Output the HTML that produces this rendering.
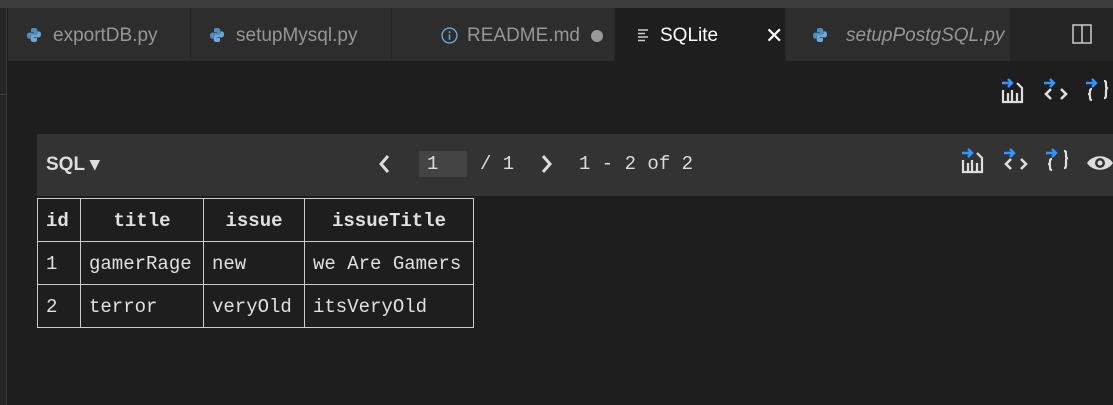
<!DOCTYPE html>
<html><head><style>
*{margin:0;padding:0;box-sizing:border-box}
body{width:1113px;height:405px;background:#1e1e1e;position:relative;overflow:hidden;font-family:"Liberation Sans",sans-serif}
.top{position:absolute;left:0;top:0;width:1113px;height:8px;background:#3c3c3c}
.side{position:absolute;left:0;top:8px;width:7px;height:397px;background:#252526;border-right:1px solid #3a3a3a}
.side i{position:absolute;left:0;top:86px;width:7px;height:1px;background:#3a3a3a}
.tabs{position:absolute;left:8px;top:8px;height:53px;width:1105px;background:#252526}
.tab{position:absolute;top:0;height:53px;background:#2d2d2d;border-right:1px solid #252526;color:#969696;font-size:19px;line-height:56px;white-space:nowrap}
.tab.act{background:#1e1e1e;color:#fff}
.py{position:absolute;top:19px;width:16px;height:16px}
.mono{font-family:"Liberation Mono",monospace}
.bar{position:absolute;left:37px;top:134px;width:1076px;height:62px;background:#333}
table{position:absolute;left:37px;top:198px;border-collapse:collapse;font-family:"Liberation Mono",monospace;font-size:19px;color:#e0e0e0}
td,th{border:1.5px solid #ccc;height:43px;padding:2px 8px 0;text-align:left;white-space:nowrap}
th{text-align:center;font-weight:bold}
</style></head><body>
<div class="top"></div>
<div class="side"><i></i></div>
<div class="tabs">
 <div class="tab" style="left:0;width:183px"><svg class="py" style="left:18px" viewBox="0 0 16 16"><path d="M8 1C5 1 5 2 5 3v2h3.2v.6H3.5C2 5.6 1 6.6 1 8.6s1 3 2.3 3H4.5V10c0-1.2 1-2 2-2h3c1 0 1.8-.8 1.8-1.8V3c0-1-1-2-3.3-2z" fill="#4e8fc2"/><path d="M8 15c3 0 3-1 3-2v-2H7.8v-.6h4.7c1.5 0 2.5-1 2.5-3s-1-3-2.3-3h-1.2V6c0 1.2-1 2-2 2h-3c-1 0-1.8.8-1.8 1.8V13c0 1 1 2 3.3 2z" fill="#6fa8d6"/></svg><span style="position:absolute;left:45px">exportDB.py</span></div>
 <div class="tab" style="left:183px;width:201px"><svg class="py" style="left:18px" viewBox="0 0 16 16"><path d="M8 1C5 1 5 2 5 3v2h3.2v.6H3.5C2 5.6 1 6.6 1 8.6s1 3 2.3 3H4.5V10c0-1.2 1-2 2-2h3c1 0 1.8-.8 1.8-1.8V3c0-1-1-2-3.3-2z" fill="#4e8fc2"/><path d="M8 15c3 0 3-1 3-2v-2H7.8v-.6h4.7c1.5 0 2.5-1 2.5-3s-1-3-2.3-3h-1.2V6c0 1.2-1 2-2 2h-3c-1 0-1.8.8-1.8 1.8V13c0 1 1 2 3.3 2z" fill="#6fa8d6"/></svg><span style="position:absolute;left:45px">setupMysql.py</span></div>
 <div class="tab" style="left:384px;width:223px"><svg class="py" style="left:49px;width:17px;height:17px" viewBox="0 0 16 16"><circle cx="8" cy="8" r="7" fill="none" stroke="#6fa8d6" stroke-width="1.3"/><rect x="7.3" y="7" width="1.4" height="5" fill="#6fa8d6"/><circle cx="8" cy="4.8" r=".9" fill="#6fa8d6"/></svg><span style="position:absolute;left:75px">README.md</span><span style="position:absolute;left:199px;top:22px;width:12px;height:12px;border-radius:50%;background:#9a9a9a"></span></div>
 <div class="tab act" style="left:607px;width:171px"><svg style="position:absolute;left:22px;top:20px" width="13" height="14" viewBox="0 0 13 14"><path d="M1 2h10M1 5.5h7M1 9h10M1 12.5h7" stroke="#ccc" stroke-width="1.4"/></svg><span style="position:absolute;left:45px">SQLite</span><span style="position:absolute;left:150px;font-size:22px">✕</span></div>
 <div class="tab" style="left:778px;width:225px"><svg class="py" style="left:26px" viewBox="0 0 16 16"><path d="M8 1C5 1 5 2 5 3v2h3.2v.6H3.5C2 5.6 1 6.6 1 8.6s1 3 2.3 3H4.5V10c0-1.2 1-2 2-2h3c1 0 1.8-.8 1.8-1.8V3c0-1-1-2-3.3-2z" fill="#4e8fc2"/><path d="M8 15c3 0 3-1 3-2v-2H7.8v-.6h4.7c1.5 0 2.5-1 2.5-3s-1-3-2.3-3h-1.2V6c0 1.2-1 2-2 2h-3c-1 0-1.8.8-1.8 1.8V13c0 1 1 2 3.3 2z" fill="#6fa8d6"/></svg><span style="position:absolute;left:60px;font-style:italic">setupPostgSQL.py</span></div>
 <svg style="position:absolute;left:1064px;top:16px" width="20" height="20" viewBox="0 0 20 20"><rect x="1" y="1" width="18" height="18" fill="none" stroke="#ccc" stroke-width="1.5"/><path d="M10 1v18" stroke="#ccc" stroke-width="1.5"/></svg>
</div>
<svg style="position:absolute;left:1000px;top:76px" width="113" height="30" viewBox="0 0 113 30">
 <g><path d="M2 7h9M8 3l4 4-4 4" stroke="#3794ff" stroke-width="2.4" fill="none"/><path d="M3 14v12h19V12l-5-5M8 26v-9M12 26v-12M17 26v-9" stroke="#ddd" stroke-width="2.2" fill="none"/></g>
 <g transform="translate(42,0)"><path d="M2 7h9M8 3l4 4-4 4" stroke="#3794ff" stroke-width="2.4" fill="none"/><path d="M9 13l-5 5 5 5M19 13l5 5-5 5" stroke="#ddd" stroke-width="2.6" fill="none"/></g>
 <g transform="translate(84,0)"><path d="M2 7h9M8 3l4 4-4 4" stroke="#3794ff" stroke-width="2.4" fill="none"/><path d="M8 13c-2 0-2 1-2 3s0 2-2 2c2 0 2 1 2 3s0 3 2 3M20 5c2 0 2 1 2 4s0 3 2 3c-2 0-2 1-2 5s0 5-2 5" stroke="#ddd" stroke-width="2.2" fill="none"/></g>
</svg>
<div class="bar">
 <span style="position:absolute;left:9px;top:19px;color:#ddd;font-weight:bold;font-size:19px">SQL ▾</span>
 <svg style="position:absolute;left:341px;top:20px" width="12" height="20"><path d="M10 2l-7 8 7 8" stroke="#ddd" stroke-width="3" fill="none"/></svg>
 <div style="position:absolute;left:382px;top:17px;width:48px;height:26px;background:#444"></div>
 <span class="mono" style="position:absolute;left:390px;top:19px;color:#ddd;font-size:19px">1</span>
 <span class="mono" style="position:absolute;left:443px;top:19px;color:#ddd;font-size:19px">/ 1</span>
 <svg style="position:absolute;left:504px;top:20px" width="12" height="20"><path d="M2 2l7 8-7 8" stroke="#ddd" stroke-width="3" fill="none"/></svg>
 <span class="mono" style="position:absolute;left:542px;top:19px;color:#ddd;font-size:19px">1 - 2 of 2</span>
 <svg style="position:absolute;left:923px;top:12px" width="153" height="30" viewBox="0 0 153 30">
  <g><path d="M2 7h9M8 3l4 4-4 4" stroke="#3794ff" stroke-width="2.4" fill="none"/><path d="M3 14v12h19V12l-5-5M8 26v-9M12 26v-12M17 26v-9" stroke="#ddd" stroke-width="2.2" fill="none"/></g>
  <g transform="translate(42,0)"><path d="M2 7h9M8 3l4 4-4 4" stroke="#3794ff" stroke-width="2.4" fill="none"/><path d="M9 13l-5 5 5 5M19 13l5 5-5 5" stroke="#ddd" stroke-width="2.6" fill="none"/></g>
  <g transform="translate(84,0)"><path d="M2 7h9M8 3l4 4-4 4" stroke="#3794ff" stroke-width="2.4" fill="none"/><path d="M8 13c-2 0-2 1-2 3s0 2-2 2c2 0 2 1 2 3s0 3 2 3M20 5c2 0 2 1 2 4s0 3 2 3c-2 0-2 1-2 5s0 5-2 5" stroke="#ddd" stroke-width="2.2" fill="none"/></g>
  <g transform="translate(125,0)"><path d="M2 17c6-9 20-9 26 0-6 9-20 9-26 0z" fill="#ddd"/><circle cx="15" cy="17" r="5" fill="#333"/><circle cx="15" cy="17" r="2.5" fill="#ddd"/></g>
 </svg>
</div>
<table>
 <tr><th style="width:43px;text-align:left">id</th><th style="width:123px">title</th><th style="width:101px">issue</th><th style="width:169px">issueTitle</th></tr>
 <tr><td>1</td><td>gamerRage</td><td>new</td><td>we Are Gamers</td></tr>
 <tr><td>2</td><td>terror</td><td>veryOld</td><td>itsVeryOld</td></tr>
</table>
</body></html>
